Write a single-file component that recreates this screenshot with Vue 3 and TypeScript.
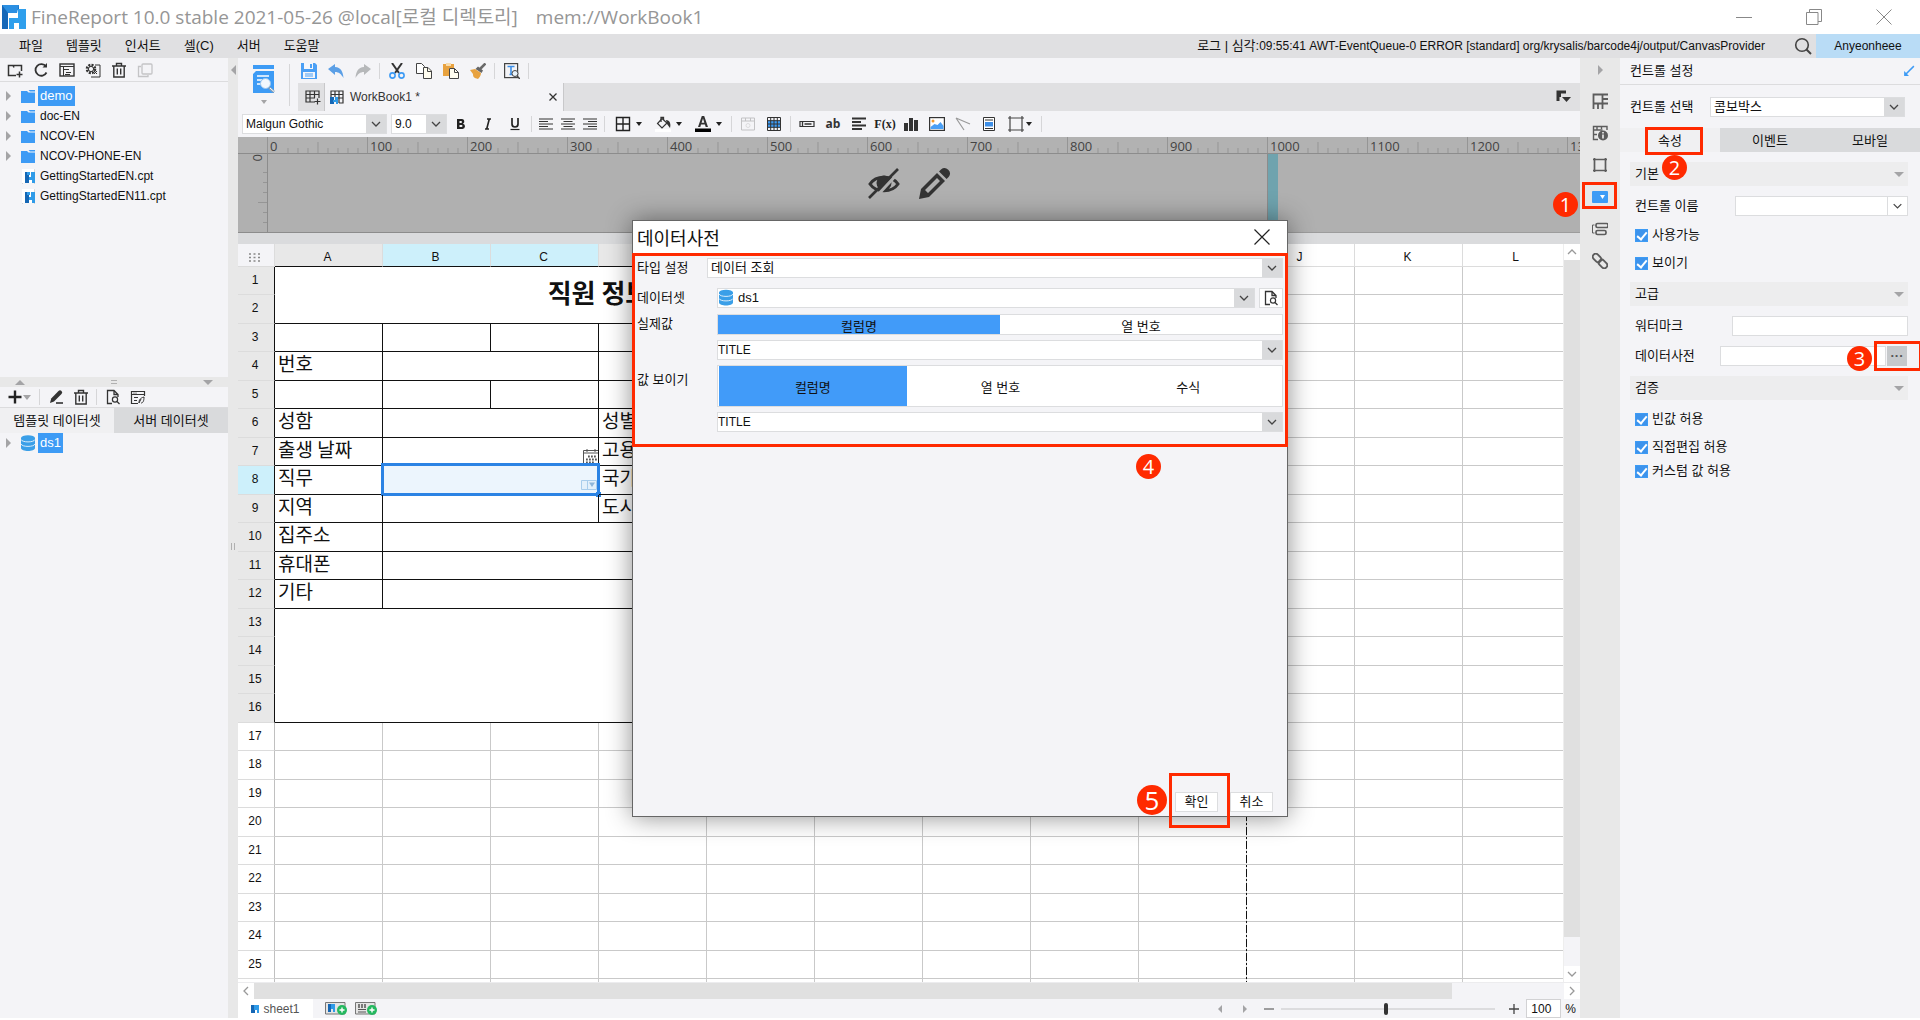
<script setup lang="ts">
import { ref } from 'vue'

interface Cell { text?: string; cols?: number; rows?: number; kind?: string }
interface Row { n: number; cells: Cell[]; blanks: number }
interface Tool { icon: string; label: string; arrow?: boolean; size?: string }

const icons: Record<string, string> = {
  newFolder: '<path d="M9 13.500H1.500V3.500H6l1 2M6 3.500h8.500V9M8 3.500h1M12.500 9.500v6M9.500 12.500h6" stroke="#333" stroke-width="1.500" fill="none"/>',
  refresh: '<path d="M13 4.500A5.800 5.800 0 1 0 13.500 10.500" stroke="#333" stroke-width="1.800" fill="none"/><path d="M9.500 5.500H14V1z" fill="#333"/>',
  panel: '<rect x="1" y="2" width="14" height="12" stroke="#333" stroke-width="1.400" fill="none"/><path d="M1 4.500h14M4.500 4.500V14M4.500 7.500H10M7 10.500h5M6 12.500h5" stroke="#333" fill="none"/>',
  gearBox: '<circle cx="6" cy="7" r="4" fill="none" stroke="#333" stroke-width="2.600" stroke-dasharray="2 1.140"/><circle cx="6" cy="7" r="2.600" fill="none" stroke="#333"/><path d="M10 3h5v12H6M9 12l3-3M9 9l3 3" stroke="#333" fill="none"/>',
  trash: '<path d="M1 4h14M5.500 4V1.500h5V4M2.800 4v11h10.400V4M6.300 6.500v6M9.700 6.500v6" stroke="#333" stroke-width="1.400" fill="none"/>',
  copyDim: '<rect x="5" y="2" width="10" height="10" rx="1" fill="none" stroke="#c4c4c6" stroke-width="1.300"/><path d="M4 4.500H1.500v10H11V13" fill="none" stroke="#c4c4c6" stroke-width="1.300"/>',
  plus: '<path d="M8 1.500v13M1.500 8h13" stroke="#222" stroke-width="2.400"/>',
  edit: '<path d="M2 14l1.200-4.500L10.500 2a2 2 0 0 1 3 3L6 12.500z" fill="#333"/><path d="M8 14h7" stroke="#333" stroke-width="1.600"/>',
  pageFind: '<path d="M7 14.500H2.500v-13H9L13 5.500V8M9 1.500v4h4" stroke="#333" stroke-width="1.300" fill="none"/><circle cx="10" cy="10.500" r="2.600" fill="none" stroke="#333" stroke-width="1.200"/><path d="M12 12.500l2.500 2.500" stroke="#333" stroke-width="1.300"/>',
  source: '<path d="M8 14.500H1.500v-12h13V7M1.500 5.500h13M4 8.500h4M4 11.500h3" stroke="#333" stroke-width="1.200" fill="none"/><circle cx="4" cy="4" r=".6"/><circle cx="6" cy="4" r=".6"/><path d="M9 14c0-3 1-5 5-6M9 14l2-4M11 14c2 0 3-2 3-6" stroke="#333" fill="none"/>',
  save: '<path d="M0 0h14l2 2v14H0z" fill="#4a9ff5"/><path d="M3 0h9v6H3zM2 9h12v6H2z" fill="#f4f6fa"/><path d="M9 1h2v4H9z" fill="#4a9ff5"/><path d="M4 11h8M4 13h8" stroke="#4a9ff5"/>',
  undo: '<path d="M0 6l7-5v3c6 0 8 5 8.500 11C13 11 11 9 7 9v3z" fill="#5b9fe6"/>',
  redo: '<path d="M16 6L9 1v3C3 4 1 9 .500 15 3 11 5 9 9 9v3z" fill="#b6b8ba"/>',
  cut: '<path d="M3 0l7 10M13 0L6 10" stroke="#333" stroke-width="2" fill="none"/><circle cx="3.500" cy="12.500" r="2.600" fill="none" stroke="#3d9bf5" stroke-width="1.600"/><circle cx="12.500" cy="12.500" r="2.600" fill="none" stroke="#3d9bf5" stroke-width="1.600"/>',
  copy: '<path d="M.500.500h5l3 3v7h-8z" fill="#fff" stroke="#444"/><path d="M7.500 4.500h4.500l3.500 3.500v7.500h-8z" fill="#fffdf0" stroke="#444"/><path d="M11.500 4.500V8.500h4" fill="none" stroke="#444"/>',
  paste: '<path d="M0 1h11v4H6v8H0z" fill="#e8a23f"/><path d="M3 0h5v3H3z" fill="#f7dcae"/><path d="M6.500 5.500h5l4 4v6h-9z" fill="#fffdf0" stroke="#444"/><path d="M11.500 5.500v4h4" fill="none" stroke="#444"/>',
  brush: '<path d="M15.500.500L10 6" stroke="#6a6a6a" stroke-width="2.600"/><path d="M8 3.500l5 4-1.500 2.500-6-4z" fill="#666"/><path d="M0 7l5-1 6 4c0 3-2 5-3 6-4-1-5-2-5-5z" fill="#e8a23f"/>',
  textFind: '<rect x=".6" y=".6" width="13" height="14" fill="none" stroke="#444" stroke-width="1.200"/><path d="M3.500 3.500h7M7 3.500v8M5.500 11.500h3" stroke="#3d8fe8" stroke-width="1.600"/><circle cx="11" cy="10.500" r="3" fill="#e8f2fb" stroke="#444"/><path d="M13 13l3 3" stroke="#444" stroke-width="1.500"/>',
  bold: '<path d="M4 3h5a2.500 2.500 0 0 1 1 4.700A2.700 2.700 0 0 1 9.500 13H4zM6.500 5v2H8a1 1 0 0 0 0-2zM6.500 9v2H8.500a1 1 0 0 0 0-2z" fill="#222" fill-rule="evenodd"/>',
  italic: '<path d="M7 3h4M5 13h4M9.300 3L6.700 13" stroke="#222" stroke-width="1.600"/>',
  underline: '<path d="M5 2v6a3 3 0 0 0 6 0V2" stroke="#222" stroke-width="1.700" fill="none"/><path d="M3.500 13.500h9" stroke="#222" stroke-width="1.200"/>',
  left: '<path d="M1 3h14M1 5.500h9M1 8h14M1 10.500h9M1 13h14" stroke="#333" stroke-width="1.200"/>',
  center: '<path d="M1 3h14M3.500 5.500h9M1 8h14M3.500 10.500h9M1 13h14" stroke="#333" stroke-width="1.200"/>',
  right: '<path d="M1 3h14M6 5.500h9M1 8h14M6 10.500h9M1 13h14" stroke="#333" stroke-width="1.200"/>',
  border: '<path d="M1.500 1.500h13v13h-13zM8 1.500v13M1.500 8h13" stroke="#222" stroke-width="1.400" fill="none"/>',
  bucket: '<path d="M0 13h16v3H0z" fill="#fff"/><path d="M7 2.500l5 4.500-5 5L2.500 7.500z" fill="none" stroke="#333" stroke-width="1.200"/><path d="M6 6V1.500h2.500V4" fill="none" stroke="#333" stroke-width="1.300"/><path d="M11 4c4 0 5 4 4 8l-3-4z" fill="#333"/>',
  color: '<path d="M0 12.500h16V16H0z" fill="#000"/><path d="M3 11L6.800 0h2.400L13 11h-2.300l-.8-2.500H6L5.300 11zM6.600 6.700h2.700L8 2.600z" fill="#333" fill-rule="evenodd"/>',
  cellDim: '<path d="M1.500 2h13v12h-13zM1.500 5h13M5.500 2v3M10.500 2v3" fill="none" stroke="#c2c2c4"/><circle cx="8" cy="9.500" r="2" fill="none" stroke="#dcdcde"/>',
  table: '<path d="M1 4.500h14v7H1z" fill="#3d9bf5"/><path d="M1.500 1.500h13v13h-13zM1.500 4.700h13M1.500 8h13M1.500 11.300h13M4.700 1.500v13M8 1.500v13M11.300 1.500v13" fill="none" stroke="#333"/>',
  field: '<path d="M1 5.500h14v5H1z" fill="none" stroke="#333" stroke-width="1.200"/><path d="M3.500 5.500v5M5.500 8h7" stroke="#333" stroke-width="1.300"/>',
  paragraph: '<path d="M1 2.500h14M1 6h9M1 9.500h14M1 13h10" stroke="#333" stroke-width="2"/>',
  chart: '<path d="M1 7h4v8H1zM6 2h4v13H6zM11 4h4v11h-4z" fill="#333"/>',
  picture: '<rect x=".6" y="1.600" width="14.800" height="12.800" fill="#fff" stroke="#333" stroke-width="1.200"/><path d="M1.500 11l4-3 3 1 3-3 3 4v3h-13z" fill="#4a9ff5"/><circle cx="4" cy="5" r="1.500" fill="#f29a2e"/>',
  lines: '<path d="M1 2l14 6M1 2l8 12" stroke="#999" stroke-width="1.200" fill="none"/>',
  report: '<path d="M2.500 1.500h11v13h-11z" fill="#fff" stroke="#333"/><path d="M4 4h8M4 12.500h8" stroke="#333"/><path d="M4 6h8v4.500H4z" fill="#3d8fe8"/>',
  frame: '<path d="M2 2h12v12H2zM0 2h16M0 14h16M2 0v16M14 0v16" fill="none" stroke="#444" stroke-width="1.200"/>',
  sheetAdd: '<path d="M10 13H1V2h13v7M1 5.500h13M1 9h9M5 2v11M9.500 2v7" stroke="#333" stroke-width="1.200" fill="none"/><path d="M12.500 9.500v6M9.500 12.500h6" stroke="#333" stroke-width="1.200"/>',
  sheetBook: '<path d="M2 8V2h12v12h-4M2 5.500h12M6 2v6M10 2v12M8 9h6" stroke="#333" stroke-width="1.200" fill="none"/><path d="M1 8h4v7H1z" fill="#1567b5"/><path d="M4 11h2V8h3v7H7v-2H4z" fill="#2f9be8"/>',
  corner: '<path d="M3 12V3h8M4.500 3v5" stroke="#333" stroke-width="3" fill="none"/><path d="M7 8h9l-4.500 5z" fill="#333"/>',
  attrCell: '<path d="M1.500 1.500h9v9h-9zM10.500 1.500H16M10.500 6H16M10.500 10.500H16M1.500 10.500V16M6 10.500V16M10.500 10.500V16" fill="none" stroke="#5c5c5c" stroke-width="1.800"/>',
  attrInfo: '<path d="M6 14.500H1.500v-13h13.500V5M1.500 5h9M1.500 9.500H5M5 1.500V5M9.500 1.500V4" fill="none" stroke="#5c5c5c" stroke-width="1.400"/><circle cx="11" cy="10.500" r="5" fill="#5c5c5c"/><path d="M11 9.500v4M11 7v1.500" stroke="#eee" stroke-width="1.600"/>',
  attrFloat: '<path d="M2.500 2.500h11v11h-11zM1 2.500h3M2.500 1v3M12 2.500h3M13.500 1v3M1 13.500h3M2.500 12v3M12 13.500h3M13.500 12v3" fill="none" stroke="#5c5c5c" stroke-width="1.700"/>',
  attrWidget: '<rect x="0" y="2" width="16" height="12" rx="1" fill="#3d9bf5"/><path d="M8 6h5l-2.500 4z" fill="#fff"/>',
  attrCond: '<rect x="4" y="2.500" width="12" height="4" rx="1.500" fill="none" stroke="#5c5c5c" stroke-width="1.700"/><rect x="4" y="9.500" width="10" height="4" rx="1.500" fill="none" stroke="#5c5c5c" stroke-width="1.700"/><path d="M2.500 4H.500v8h2" fill="none" stroke="#5c5c5c"/>',
  attrLink: '<g transform="rotate(45 8 8)" fill="none" stroke="#5c5c5c" stroke-width="1.900"><rect x="-1" y="5" width="9.500" height="6" rx="3"/><rect x="7.500" y="5" width="9.500" height="6" rx="3"/></g>',
  db: '<ellipse cx="8" cy="3" rx="7" ry="2.800" fill="#3a9fe8"/><path d="M1 3v10c0 4 14 4 14 0V3z" fill="#3a9fe8"/><path d="M1 4.500c1 3.200 13 3.200 14 0M1 9c1 3.200 13 3.200 14 0" fill="none" stroke="#eaf4fc" stroke-width=".9"/>',
  folder: '<path d="M1 3h6l1.500 1.500H15V15H1z" fill="#3d9bf5"/><path d="M8.500 2H15v1.500H10z" fill="#3d9bf5"/>',
  cpt: '<path d="M2.500 1v15M2.500 1.500h12V16" stroke="#d5d7da" fill="none"/><path d="M2 1h12v14H2z" fill="#fff"/><path d="M5 4h4v11H5z" fill="#1567b5"/><path d="M9 9h2V4h4v11h-3v-3H9zM7 4h3v3H7z" fill="#2f9be8"/>',
  expand: '<path d="M14.500 1.500L4 12" stroke="#3d9bf5" stroke-width="2"/><path d="M1.500 14.500V8l6.500 6.500z" fill="#3d9bf5"/>',
  calendar: '<path d="M.500 1.500h15V16H.500z" fill="#fff" stroke="#555"/><path d="M.500 4h15M4 0v3M12 0v3" stroke="#555" fill="none"/><path d="M5 7.500h9M3 10.500h11M3 13.500h9" stroke="#555" stroke-width="1.800" stroke-dasharray="1.800 1.200"/>',
  comboDim: '<path d="M.500 3.500h15v9H.500zM6.500 3.500v9" fill="#e3f0fb" stroke="#a9cdec"/><path d="M8 5.500h6L11 10z" fill="#8fb6da"/>',
}

const menus = ['파일', '템플릿', '인서트', '셀(C)', '서버', '도움말']
const treeTools: Tool[] = [
  { icon: 'newFolder', label: '새 폴더' }, { icon: 'refresh', label: '새로 고침' }, { icon: 'panel', label: '위치' },
  { icon: 'gearBox', label: '이름 바꾸기' }, { icon: 'trash', label: '삭제' }, { icon: 'copyDim', label: '복사' },
]
const tree = [
  { name: 'demo', folder: true }, { name: 'doc-EN', folder: true }, { name: 'NCOV-EN', folder: true },
  { name: 'NCOV-PHONE-EN', folder: true }, { name: 'GettingStartedEN.cpt', folder: false }, { name: 'GettingStartedEN11.cpt', folder: false },
]
const fileTools: Tool[][] = [
  [{ icon: 'save', label: '저장' }, { icon: 'undo', label: '실행 취소' }, { icon: 'redo', label: '다시 실행' }],
  [{ icon: 'cut', label: '잘라내기' }, { icon: 'copy', label: '복사' }, { icon: 'paste', label: '붙여넣기' }, { icon: 'brush', label: '서식 복사' }],
  [{ icon: 'textFind', label: '찾기' }],
]
const formatTools: { size: string; items: Tool[] }[] = [
  { size: 'w27', items: [{ icon: 'bold', label: '굵게' }, { icon: 'italic', label: '기울임' }, { icon: 'underline', label: '밑줄' }] },
  { size: 'w22', items: [{ icon: 'left', label: '왼쪽' }, { icon: 'center', label: '가운데' }, { icon: 'right', label: '오른쪽' }] },
  { size: 'w40', items: [{ icon: 'border', label: '테두리', arrow: true }, { icon: 'bucket', label: '배경색', arrow: true }, { icon: 'color', label: '글자색', arrow: true }] },
  { size: 'w26', items: [{ icon: 'cellDim', label: '셀 병합' }, { icon: 'table', label: '표' }] },
  {
    size: 'w26',
    items: [
      { icon: 'field', label: '데이터 열' }, { icon: 'ab', label: '텍스트' }, { icon: 'paragraph', label: '서식 있는 텍스트' },
      { icon: 'fx', label: '수식' }, { icon: 'chart', label: '차트' }, { icon: 'picture', label: '그림' },
      { icon: 'lines', label: '사선' }, { icon: 'report', label: '서브 리포트' }, { icon: 'frame', label: '플로팅 요소', arrow: true },
    ],
  },
]
const strip = ['attrCell', 'attrInfo', 'attrFloat', 'attrWidget', 'attrCond', 'attrLink']
const stripLabels = ['셀 요소', '셀 속성', '플로팅 요소', '컨트롤 설정', '조건 속성', '하이퍼링크']

const marks = Array.from({ length: 14 }, (_, i) => i * 100)
const minor = [10, 20, 30, 40, 50, 60, 70, 80, 90]
const columns = 'ABCDEFGHIJKL'.split('')

function cellsOf(n: number): Cell[] {
  const six = Array.from({ length: 6 }, () => ({}))
  const labels: Record<number, string[]> = {
    4: ['번호', ''], 6: ['성함', '성별'], 7: ['출생 날짜', '고용일'], 8: ['직무', '국가'], 9: ['지역', '도시'],
    10: ['집주소'], 11: ['휴대폰'], 12: ['기타'],
  }
  if (n === 1) return [{ text: '직원 정보', cols: 6, rows: 2, kind: 'title' }]
  if (n === 13) return [{ cols: 6, rows: 4 }]
  if (n === 3 || n === 5) return six
  const l = labels[n]
  if (!l) return []
  if (l.length === 1) return [{ text: l[0] }, { cols: 5 }]
  const kind = n === 7 ? 'date' : n === 8 ? 'picked' : ''
  return [{ text: l[0] }, { cols: 2, kind }, { text: l[1] }, { cols: 2 }]
}
const rows: Row[] = Array.from({ length: 26 }, (_, i) => {
  const n = i + 1
  return { n, cells: cellsOf(n), blanks: n <= 16 ? columns.length - 6 : columns.length }
})

const usable = ref(true)
const visible = ref(true)
const allowEmpty = ref(true)
const allowEdit = ref(true)
const allowCustom = ref(true)
const zoom = ref(49)
</script>

<template>
  <div class="app">
    <header class="titlebar">
      <svg class="logo" viewBox="0 0 24 24"><path d="M0 0h17v5H6v19H0z" fill="#1668b8" /><path d="M0 0h17l-2 8H6z" fill="#2b8fe2" /><path d="M7 13h9V4h8v20h-7v-6h-5v6H7z" fill="#2f9fec" /></svg>
      <h1>FineReport 10.0 stable 2021-05-26 @local[로컬 디렉토리]<span>mem://WorkBook1</span></h1>
      <div class="window-buttons">
        <button aria-label="최소화"><svg viewBox="0 0 16 16"><path d="M0 8.500h16" stroke="#888" /></svg></button>
        <button aria-label="이전 크기로"><svg viewBox="0 0 16 16"><path d="M.5 3.500h11.500v12H.5zM3.500 3.500v-3h12v12h-3.500" fill="none" stroke="#888" /></svg></button>
        <button aria-label="닫기"><svg viewBox="0 0 16 16"><path d="M.5.5l15 15M15.500.5l-15 15" stroke="#888" /></svg></button>
      </div>
    </header>

    <nav class="menubar">
      <button v-for="m in menus" :key="m">{{ m }}</button>
      <span class="log"><span>로그 | 심각:</span>09:55:41 AWT-EventQueue-0 ERROR [standard] org/krysalis/barcode4j/output/CanvasProvider</span>
      <button class="search" aria-label="검색"><svg viewBox="0 0 18 18"><circle cx="8" cy="8" r="6.300" fill="none" stroke="#444" stroke-width="1.600" /><path d="M12.500 12.500l4.500 4.500" stroke="#444" stroke-width="2" /></svg></button>
      <a href="#" class="user">Anyeonheee</a>
    </nav>

    <div class="workspace">
      <aside class="left">
        <section class="files">
          <div class="tools">
            <button v-for="t in treeTools" :key="t.icon" class="w26" :aria-label="t.label"><svg class="ic" viewBox="0 0 16 16" v-html="icons[t.icon]" /></button>
          </div>
          <ul class="tree">
            <li v-for="(f, i) in tree" :key="f.name">
              <i class="tri-right" :class="{ none: !f.folder }"></i>
              <svg class="ic" viewBox="0 0 16 16" v-html="icons[f.folder ? 'folder' : 'cpt']" />
              <span :class="{ on: i === 0 }">{{ f.name }}</span>
            </li>
          </ul>
        </section>
        <div class="hsplit"><i class="tri-up"></i><b></b><i class="tri-down"></i></div>
        <section class="datasets">
          <div class="tools">
            <button class="add-ds" aria-label="추가"><svg class="ic" viewBox="0 0 16 16" v-html="icons.plus" /><i class="tri-down"></i></button>
            <i class="sep"></i>
            <button class="w25" aria-label="편집"><svg class="ic" viewBox="0 0 16 16" v-html="icons.edit" /></button>
            <button class="w25" aria-label="삭제"><svg class="ic" viewBox="0 0 16 16" v-html="icons.trash" /></button>
            <i class="sep"></i>
            <button class="w25" aria-label="미리보기"><svg class="ic" viewBox="0 0 16 16" v-html="icons.pageFind" /></button>
            <button class="w25" aria-label="연결"><svg class="ic" viewBox="0 0 16 16" v-html="icons.source" /></button>
          </div>
          <div class="tabs"><button class="on">템플릿 데이터셋</button><button>서버 데이터셋</button></div>
          <ul class="tree flush">
            <li><i class="tri-right"></i><svg class="ic" viewBox="0 0 16 16" v-html="icons.db" /><span class="on">ds1</span></li>
          </ul>
        </section>
      </aside>

      <div class="vsplit"><i class="tri-left"></i><b></b></div>

      <main class="center">
        <div class="top">
          <button class="preview" aria-label="미리보기">
            <svg viewBox="0 0 22 28"><path d="M0 0h21v4H0zM0 9l3-3h18v22H0z" fill="#3d9bf5" /><path d="M4 11h12M4 15h5M4 19h4" stroke="#fff" stroke-width="1.600" /><circle cx="12.500" cy="18.500" r="5" fill="#f2f8fd" stroke="#9cc6ee" /><path d="M16 22.500l5 4.500" stroke="#8aa2b8" stroke-width="2.400" /><path d="M17 23l4 3.500" stroke="#fff" /></svg>
            <i class="tri-down"></i>
          </button>
          <div class="top-right">
            <div class="file-tools">
              <template v-for="(g, gi) in fileTools" :key="gi">
                <button v-for="t in g" :key="t.icon" class="w27" :aria-label="t.label"><svg class="ic" viewBox="0 0 16 16" v-html="icons[t.icon]" /></button>
                <i class="sep"></i>
              </template>
            </div>
            <div class="book-tabs">
              <button class="add" aria-label="새 템플릿"><svg class="ic" viewBox="0 0 16 16" v-html="icons.sheetAdd" /></button>
              <div class="book"><svg class="ic" viewBox="0 0 16 16" v-html="icons.sheetBook" /><span>WorkBook1 *</span>
                <button aria-label="탭 닫기"><svg viewBox="0 0 8 8"><path d="M.5.5l7 7M7.500.5l-7 7" stroke="#333" stroke-width="1.300" /></svg></button>
              </div>
              <button class="more" aria-label="탭 목록"><svg class="ic" viewBox="0 0 16 16" v-html="icons.corner" /></button>
            </div>
          </div>
        </div>

        <div class="format">
          <label class="pick font"><select aria-label="글꼴"><option>Malgun Gothic</option></select><svg viewBox="0 0 20 18"><path d="M6 7l4 4 4-4" /></svg></label>
          <label class="pick size"><select aria-label="글자 크기"><option>9.0</option></select><svg viewBox="0 0 20 18"><path d="M6 7l4 4 4-4" /></svg></label>
          <template v-for="(g, gi) in formatTools" :key="gi">
            <button v-for="t in g.items" :key="t.icon" :class="t.icon === 'frame' ? 'w36' : g.size" :aria-label="t.label">
              <span v-if="t.icon === 'ab'" class="ab">ab</span>
              <span v-else-if="t.icon === 'fx'" class="fx">F(x)</span>
              <svg v-else class="ic" viewBox="0 0 16 16" v-html="icons[t.icon]" />
              <i v-if="t.arrow" class="tri-down dark"></i>
            </button>
            <i class="sep"></i>
          </template>
        </div>

        <div class="ruler">
          <div v-for="m in marks" :key="m" class="mark">
            <svg viewBox="0 0 100 17"><path v-for="t in minor" :key="t" v-show="t > (m === 0 ? 10 : m >= 1000 ? 30 : 20)" :d="`M${t + 1} ${t === 50 ? 5 : 11}V17`" stroke="#959595" /></svg>
            <span>{{ m }}</span>
          </div>
        </div>
        <div class="band">
          <div class="vruler"><span>0</span><i v-for="t in 6" :key="t" :class="{ long: t === 4 }"></i></div>
          <div class="canvas"></div>
          <div class="limit"></div>
          <div class="rest"></div>
          <div class="band-icons">
            <svg viewBox="0 0 32 32"><path d="M2 16C8 7 24 7 30 16 24 25 8 25 2 16z" fill="none" stroke="#333" stroke-width="3" /><circle cx="16" cy="15" r="7.500" fill="#333" /><path d="M32 3L6 31" stroke="#b0b0b0" stroke-width="3" /><path d="M30 1L1 30" stroke="#333" stroke-width="2.600" /></svg>
            <svg viewBox="0 0 32 32"><path d="M0 31l2-10L18 5l8 8L10 29zM6 22l3 3L21 13l-3-3z" fill="#333" fill-rule="evenodd" /><path d="M20 3.500l2-2a5.400 5.400 0 0 1 7.600 7.600l-2 2z" fill="#333" /></svg>
          </div>
        </div>

        <div class="sheet">
          <div class="grid">
            <table>
              <colgroup><col class="head-col" /><col v-for="c in columns" :key="c" class="data-col" /></colgroup>
              <thead>
                <tr>
                  <th class="all"><svg viewBox="0 0 12 9"><path d="M0 1h12M0 4.500h12M0 8h12" stroke="#888" stroke-width="1.600" stroke-dasharray="2 2.500" /></svg></th>
                  <th v-for="(c, i) in columns" :key="c" :class="{ used: i < 6, hit: i === 1 || i === 2 }">{{ c }}</th>
                </tr>
              </thead>
              <tbody>
                <tr v-for="r in rows" :key="r.n" :class="r.n % 2 ? 'short' : 'tall'">
                  <th :class="{ used: r.n <= 16, hit: r.n === 8 }">{{ r.n <= 25 ? r.n : '' }}</th>
                  <td v-for="(c, i) in r.cells" :key="i" class="form" :class="c.kind" :colspan="c.cols" :rowspan="c.rows">
                    {{ c.text }}
                    <svg v-if="c.kind === 'date'" class="ic corner" viewBox="0 0 16 16" v-html="icons.calendar" />
                    <div v-if="c.kind === 'picked'" class="selection"><svg class="ic" viewBox="0 0 16 16" v-html="icons.comboDim" /></div>
                  </td>
                  <td v-for="b in r.blanks" :key="'b' + b"></td>
                </tr>
              </tbody>
            </table>
            <div class="page-end"></div>
          </div>
          <div class="vscroll"><button aria-label="위로"><svg viewBox="0 0 16 16"><path d="M4 10l4-4 4 4" /></svg></button><i class="thumb"></i><i class="track"></i><button aria-label="아래로"><svg viewBox="0 0 16 16"><path d="M4 6l4 4 4-4" /></svg></button></div>
        </div>
        <div class="hscroll"><button aria-label="왼쪽으로"><svg viewBox="0 0 16 16"><path d="M10 4L6 8l4 4" /></svg></button><i class="thumb"></i><i class="track"></i><button aria-label="오른쪽으로"><svg viewBox="0 0 16 16"><path d="M6 4l4 4-4 4" /></svg></button></div>
        <footer class="status">
          <button class="sheet-tab"><svg viewBox="0 0 8 8"><path d="M0 0h4v8H0z" fill="#1567b5" /><path d="M3 0h5v8H6V5H3z" fill="#2f9be8" /></svg>sheet1</button>
          <button class="sheet-add" aria-label="시트 추가"><svg viewBox="0 0 22 13"><path d="M.5.500h19.500v11.500H.5z" fill="#e4e4e4" stroke="#777" /><path d="M3 2h3v8H3z" fill="#1567b5" /><path d="M6 2h4v8H8V7H6z" fill="#2f9be8" /><circle cx="17" cy="8" r="5" fill="#25b85f" /><path d="M17 5.500v5M14.500 8h5" stroke="#fff" stroke-width="1.400" /></svg></button>
          <button class="sheet-add" aria-label="폼 시트 추가"><svg viewBox="0 0 22 13"><path d="M.5.500h19.500v11.500H.5z" fill="#e4e4e4" stroke="#777" /><path d="M3 3h9M3 5h9" stroke="#555" stroke-width="1.500" stroke-dasharray="2 1" /><path d="M3 7.500h8M3 10h8" stroke="#555" /><circle cx="17" cy="8" r="5" fill="#25b85f" /><path d="M17 5.500v5M14.500 8h5" stroke="#fff" stroke-width="1.400" /></svg></button>
          <span class="grow"></span>
          <button class="nav" aria-label="이전 시트"><i class="tri-left"></i></button>
          <button class="nav" aria-label="다음 시트"><i class="tri-right"></i></button>
          <button class="step" aria-label="축소"><svg viewBox="0 0 12 12"><path d="M1 6h10" stroke="#888" stroke-width="1.600" /></svg></button>
          <input v-model="zoom" class="zoom" type="range" min="0" max="100" aria-label="확대/축소" />
          <button class="step" aria-label="확대"><svg viewBox="0 0 12 12"><path d="M1 6h10M6 1v10" stroke="#444" stroke-width="1.300" /></svg></button>
          <input class="percent" value="100" aria-label="배율" /><span class="pc">%</span>
        </footer>
      </main>

      <div class="strip">
        <i class="tri-right"></i>
        <button v-for="(s, i) in strip" :key="s" :aria-label="stripLabels[i]"><svg class="ic" viewBox="0 0 16 16" v-html="icons[s]" /><b v-if="i === 3" class="mark-box"></b></button>
        <b class="badge one">1</b>
      </div>

      <aside class="props">
        <h2>컨트롤 설정<svg viewBox="0 0 16 16" v-html="icons.expand" /></h2>
        <div class="choose">
          <label for="widget">컨트롤 선택</label>
          <span class="pick"><select id="widget"><option>콤보박스</option></select><svg viewBox="0 0 20 18"><path d="M6 7l4 4 4-4" /></svg></span>
        </div>
        <div class="tabs"><button class="on">속성<b class="mark-box"></b><b class="badge">2</b></button><button>이벤트</button><button>모바일</button></div>
        <div class="groups">
          <h3>기본<i class="tri-down"></i></h3>
          <div class="row">
            <label for="wname">컨트롤 이름</label>
            <span class="pick plain name"><select id="wname"><option></option></select><svg viewBox="0 0 20 18"><path d="M6 7l4 4 4-4" /></svg></span>
          </div>
          <label class="check"><input v-model="usable" type="checkbox" />사용가능</label>
          <label class="check last"><input v-model="visible" type="checkbox" />보이기</label>
          <h3>고급<i class="tri-down"></i></h3>
          <div class="row"><label for="water">워터마크</label><input id="water" class="text water" type="text" /></div>
          <div class="row dict">
            <label for="dict">데이터사전</label><input id="dict" class="text" type="text" /><button aria-label="데이터사전 편집">···</button>
            <b class="badge">3</b><b class="mark-box"></b>
          </div>
          <h3>검증<i class="tri-down"></i></h3>
          <label class="check"><input v-model="allowEmpty" type="checkbox" />빈값 허용</label>
          <label class="check"><input v-model="allowEdit" type="checkbox" />직접편집 허용</label>
          <label class="check near"><input v-model="allowCustom" type="checkbox" />커스텀 값 허용</label>
        </div>
      </aside>
    </div>

    <div class="overlay">
      <section class="dialog" role="dialog" aria-labelledby="dlg">
        <header><h2 id="dlg">데이터사전</h2><button aria-label="닫기"><svg viewBox="0 0 16 16"><path d="M.5.5l15 15M15.500.5l-15 15" stroke="#222" stroke-width="1.200" /></svg></button></header>
        <div class="body">
          <div class="line first">
            <label for="type">타입 설정</label>
            <span class="pick"><select id="type"><option>데이터 조회</option></select><svg viewBox="0 0 20 18"><path d="M6 7l4 4 4-4" /></svg></span>
          </div>
          <div class="line">
            <label for="ds">데이터셋</label>
            <span class="pick ds"><select id="ds"><option>ds1</option></select><svg class="ic lead" viewBox="0 0 16 16" v-html="icons.db" /><svg viewBox="0 0 20 18"><path d="M6 7l4 4 4-4" /></svg></span>
            <button class="view" aria-label="미리보기"><svg class="ic" viewBox="0 0 16 16" v-html="icons.pageFind" /></button>
          </div>
          <div class="line stack">
            <label for="actual">실제값</label>
            <div>
              <div class="seg"><button class="on">컬럼명</button><button>열 번호</button></div>
              <span class="pick tight"><select id="actual"><option>TITLE</option></select><svg viewBox="0 0 20 18"><path d="M6 7l4 4 4-4" /></svg></span>
            </div>
          </div>
          <div class="line stack">
            <label for="shown" class="low">값 보이기</label>
            <div>
              <div class="seg high"><button class="on">컬럼명</button><button>열 번호</button><button>수식</button></div>
              <span class="pick tight"><select id="shown"><option>TITLE</option></select><svg viewBox="0 0 20 18"><path d="M6 7l4 4 4-4" /></svg></span>
            </div>
          </div>
          <b class="mark-box"></b>
          <b class="badge four">4</b>
        </div>
        <div class="actions">
          <button class="ok">확인<b class="mark-box"></b><b class="badge five">5</b></button>
          <button>취소</button>
        </div>
      </section>
    </div>
  </div>
</template>

<style>
body {
  margin: 0;
  background: #fff;
}
</style>

<style scoped>
.app, .app :deep(*) { box-sizing: border-box; }
.app {
  position: relative;
  display: flex;
  flex-direction: column;
  height: 100vh;
  overflow: hidden;
  font: 12px/16px "Liberation Sans", "Noto Sans CJK KR", sans-serif;
  color: #111;
}
button, input, select { font: inherit; color: inherit; margin: 0; }
button { border: 0; padding: 0; background: none; display: inline-flex; align-items: center; justify-content: center; flex: none; }
h1, h2, h3, ul { margin: 0; padding: 0; font-weight: normal; list-style: none; }
svg { display: block; flex: none; }
.ic { width: 16px; height: 16px; }
.w22 { width: 22px; }
.w25 { width: 25px; }
.w26 { width: 26px; }
.w27 { width: 27px; }
.w36 { width: 36px; }
.w40 { width: 40px; }
.sep { width: 1px; height: 16px; margin: 0 3px; background: #d6d6d8; flex: none; }
.tri-right, .tri-left, .tri-up, .tri-down { width: 0; height: 0; border: 5px solid transparent; flex: none; }
.tri-right { border-left-color: #a4a4a6; border-right-width: 0; }
.tri-left { border-right-color: #a4a4a6; border-left-width: 0; }
.tri-up { border-bottom-color: #a4a4a6; border-top-width: 0; }
.tri-down { border-top-color: #a4a4a6; border-bottom-width: 0; }
.tri-down.dark { border-width: 4px 3px 0; border-top-color: #222; }

.titlebar { display: flex; align-items: center; height: 34px; padding-left: 2px; background: #fff; flex: none; }
.logo { width: 24px; height: 24px; }
.titlebar h1 { flex: 1; margin-left: 5px; font: 19px/24px "Open Sans", "Noto Sans CJK KR", sans-serif; color: #969696; white-space: nowrap; }
.titlebar h1 span { margin-left: 18px; }
.window-buttons { display: flex; gap: 54px; margin-right: 28px; }
.window-buttons svg { width: 16px; height: 16px; }

.menubar { display: flex; align-items: center; height: 24px; padding-left: 19px; gap: 23px; background: #e0e0e2; font-size: 13px; flex: none; }
.log { flex: 1; text-align: right; font-size: 12px; white-space: nowrap; }
.log span { font-size: 13px; }
.search { margin-right: -19px; margin-left: 6px; }
.search svg { width: 18px; height: 18px; }
.user { display: flex; align-items: center; justify-content: center; align-self: stretch; width: 104px; background: #b9dcf6; color: #111; text-decoration: none; font-size: 12px; }

.workspace { flex: 1; min-height: 0; display: grid; grid-template-columns: 228px 10px minmax(0, 1fr) 40px 300px; padding-bottom: 2px; }

.left { display: flex; flex-direction: column; background: #f4f4f7; min-height: 0; }
.files { height: 319px; }
.tools { display: flex; align-items: center; padding-left: 2px; height: 24px; border-bottom: 1px solid #dcdcde; }
.datasets .tools { height: 21px; }
.add-ds { width: 34px; justify-content: flex-start; padding-left: 5px; }
.add-ds .tri-down { border-width: 5px 4px 0; }
.tree { padding-top: 4px; }
.tree.flush { padding-top: 0; }
.tree li { display: flex; align-items: center; height: 20px; padding-left: 6px; }
.tree .ic { margin: 0 2px 0 9px; }
.tree .none { visibility: hidden; }
.tree span { line-height: 20px; padding: 0 2px; }
.tree .on { background: #3d9bf5; color: #fff; font-size: 13px; }
.hsplit { display: flex; align-items: center; justify-content: space-between; height: 10px; padding: 0 15px; background: #e8e8e8; }
.hsplit b { width: 6px; height: 4px; border: solid #b0b0b0; border-width: 1px 0; }
.datasets { flex: 1; }
.tabs { display: flex; font-size: 13px; }
.tabs button { position: relative; flex: 1; height: 25px; background: #d9dadc; }
.tabs .on { background: #f0f0f2; }

.vsplit { display: flex; flex-direction: column; align-items: center; background: #e8e8e8; padding-top: 7px; }
.vsplit b { width: 4px; height: 7px; margin-top: auto; margin-bottom: auto; border: solid #b0b0b0; border-width: 0 1px; }

.center { display: flex; flex-direction: column; min-height: 0; background: #f4f4f7; }
.top { display: flex; height: 53px; }
.preview { flex-direction: column; gap: 7px; width: 52px; height: 42px; margin-top: 6px; border-right: 1px solid #d6d6d8; justify-content: flex-start; padding-top: 1px; }
.preview svg { width: 22px; height: 28px; }
.preview .tri-down { border-width: 4px 3px 0; }
.top-right { flex: 1; display: flex; flex-direction: column; min-width: 0; }
.file-tools { display: flex; align-items: center; height: 25px; padding-left: 5px; }
.book-tabs { display: flex; align-items: center; height: 28px; margin-left: 8px; background: #e0e0e2; }
.add { width: 27px; height: 28px; padding-left: 4px; border-right: 1px solid #c8c8ca; }
.book { display: flex; align-items: center; width: 239px; height: 28px; padding: 0 6px 0 4px; background: #f4f4f7; border-right: 1px solid #c8c8ca; }
.book span { flex: 1; padding-left: 5px; font-size: 12px; color: #333; }
.book button { width: 8px; }
.book button svg { width: 8px; height: 8px; }
.more { margin-left: auto; margin-right: 9px; }

.format { display: flex; align-items: center; height: 26px; padding-left: 4px; }
.format > button { gap: 5px; height: 22px; }
.format .w36 { gap: 2px; }
.ab { font: bold 12px/14px "Open Sans", sans-serif; color: #333; }
.fx { font: bold 12px/14px "Liberation Serif", serif; color: #222; }
.pick { display: grid; grid-template-columns: minmax(0, 1fr) 20px; height: 20px; border: 1px solid #dcdddf; background: #fff; }
.pick select { grid-area: 1 / 1 / 2 / 3; appearance: none; border: 0; border-radius: 0; background: none; padding: 0 22px 0 3px; width: 100%; outline: 0; }
.pick svg:last-child { grid-area: 1 / 2; width: 20px; height: 18px; background: #d9dadc; pointer-events: none; }
.pick svg path { fill: none; stroke: #444; stroke-width: 1.3; }
.pick.font { width: 145px; margin-right: 4px; }
.pick.size { width: 56px; }
.pick.plain svg:last-child { background: #fff; border-left: 1px solid #dcdddf; }

.ruler { display: flex; height: 17px; padding-left: 29px; background: #b2b2b2; border-bottom: 1px solid #8c8c8c; overflow: hidden; }
.mark { display: grid; flex: none; width: 100px; height: 16px; border-left: 1px solid #959595; }
.mark svg { grid-area: 1 / 1; width: 100px; height: 17px; margin-left: -1px; }
.mark span { grid-area: 1 / 1; padding-left: 2px; font: 13px/18px "Open Sans", sans-serif; color: #444; }
.band { position: relative; display: grid; grid-template-columns: 30px 1000px 10px minmax(0, 1fr); height: 79px; background: #b0b0b0; flex: none; }
.vruler { display: flex; flex-direction: column; align-items: flex-end; gap: 9px; border-right: 1px solid #8c8c8c; border-bottom: 1px solid #8c8c8c; }
.vruler span { writing-mode: vertical-rl; font: 13px/14px "Open Sans", sans-serif; color: #444; height: 9px; margin-right: 2px; }
.vruler i { width: 4px; height: 1px; background: #959595; }
.vruler .long { width: 9px; }
.canvas { border-right: 1px solid #8c8c8c; border-bottom: 1px solid #8c8c8c; }
.limit { background: #6fa3ae; }
.rest { border-bottom: 1px solid #9c9c9c; }
.band-icons { position: absolute; inset: 0; display: flex; justify-content: center; gap: 19px; padding-top: 14px; }
.band-icons svg { width: 32px; height: 32px; }

.sheet { display: flex; flex: 1; min-height: 0; border-top: 11px solid #dadbdd; }
.grid { position: relative; flex: 1; min-width: 0; overflow: hidden; background: #fff; }
table { table-layout: fixed; width: 1px; border-spacing: 0; }
.head-col { width: 37px; }
.data-col { width: 108px; }
th, td { padding: 0; border: solid #c9c9c9; border-width: 0 1px 1px 0; overflow: hidden; }
th { font-weight: normal; font-size: 12px; line-height: 14px; background: #fff; border-color: #dcdcdc; }
thead th { padding: 3px 2px 0 0; }
tbody th { border-right-color: #c0c0c0; padding: 0 2px 2px 0; }
thead tr { height: 23px; }
.short { height: 28px; }
.tall { height: 29px; }
th.used { background: #e8e8e8; }
thead th.used { border-bottom-color: #111; }
tbody th.used { border-right-color: #111; }
th.hit { background: #cdf0fb; }
.all { background: #f4f4f7; }
.all svg { width: 12px; height: 9px; margin: 2px 0 0 11px; }
.form { position: relative; border-color: #111; padding-left: 3px; vertical-align: top; font: 19px/22px "Noto Sans CJK KR", sans-serif; }
.form.title { text-align: center; vertical-align: middle; font-weight: bold; font-size: 26px; line-height: 36px; padding: 0 0 6px; }
.corner { position: absolute; right: -1px; bottom: 0; }
.form.picked { overflow: visible; }
.selection { position: absolute; inset: -3px -2px -2px; display: flex; align-items: flex-end; justify-content: flex-end; border: 3px solid #2b83e4; background: #ecf5fd; }
.selection::after { content: ""; position: absolute; right: -4px; bottom: -4px; width: 5px; height: 5px; background: #2b83e4; }
.page-end { position: absolute; top: 23px; bottom: 0; left: 1008px; width: 1px; background: repeating-linear-gradient(#111 0 8px, #ddd 8px 10px, #111 10px 12px, #ddd 12px 14px); }
.vscroll { display: flex; flex-direction: column; width: 17px; border-left: 1px solid #eee; }
.hscroll { display: flex; height: 17px; border-top: 1px solid #ececee; }
.vscroll button, .hscroll button { width: 16px; height: 16px; background: #fff; }
.vscroll svg, .hscroll svg { width: 16px; height: 16px; fill: none; stroke: #999; stroke-width: 1.3; }
.thumb { flex: 23; background: #e0e0e0; }
.hscroll .thumb { flex: 32; }
.track { flex: 1; }
.hscroll .track { flex: 3; }
.status { display: flex; align-items: center; height: 19px; }
.sheet-tab { gap: 4px; width: 75px; height: 19px; background: #fff; color: #555; font-size: 12px; margin-right: 12px; }
.sheet-tab svg { width: 8px; height: 8px; }
.sheet-add { margin-right: 8px; }
.sheet-add svg { width: 22px; height: 13px; }
.grow { flex: 1; }
.nav { width: 25px; }
.nav i { border-width: 4px; }
.nav .tri-left { border-left-width: 0; }
.nav .tri-right { border-right-width: 0; }
.step { width: 24px; }
.zoom + .step { margin-left: 7px; }
.step svg { width: 12px; height: 12px; }
.zoom { appearance: none; width: 214px; height: 12px; background: linear-gradient(#dcdcde, #dcdcde) center / 100% 2px no-repeat; }
.zoom::-webkit-slider-thumb { appearance: none; width: 4px; height: 12px; border-radius: 2px; background: #333; }
.percent { width: 35px; height: 19px; border: 1px solid #d2d2d4; background: #fff; padding: 0 4px; outline: 0; }
.pc { padding: 0 4px; }

.strip { position: relative; display: flex; flex-direction: column; align-items: center; padding-top: 7px; background: #e8e8e8; }
.strip .tri-right { margin-bottom: 10px; }
.strip button { position: relative; width: 34px; height: 32px; }
.mark-box { position: absolute; border: 3px solid #ff2a00; pointer-events: none; }
.strip .mark-box { inset: 1px 0 4px -1px; }
.badge { position: absolute; display: flex; align-items: center; justify-content: center; width: 25px; height: 25px; border-radius: 50%; background: #ff2a00; color: #fff; font: 20px/24px "Open Sans", sans-serif; }
.badge.one { left: -27px; top: 134px; }

.props { background: #f4f4f7; font-size: 13px; min-width: 0; }
.props h2 { display: flex; align-items: center; justify-content: space-between; height: 27px; padding: 0 5px 0 10px; font-size: 13px; border-bottom: 1px solid #dcdcde; }
.props h2 svg { width: 12px; height: 12px; }
.choose { display: flex; align-items: center; padding: 12px 15px 11px 10px; }
.choose label { width: 80px; }
.choose .pick { flex: 1; }
.props .tabs button { height: 24px; padding-top: 2px; }
.props .tabs .mark-box { inset: -1px 17px -3px 25px; }
.props .tabs .badge { left: 42px; top: 27px; z-index: 1; }
.groups { padding: 10px 12px 0 10px; }
h3 { display: flex; align-items: center; justify-content: space-between; height: 24px; padding: 0 4px 0 5px; font-size: 13px; background: #ededee; }
h3 i { border-width: 5px 5px 0; }
.row { display: flex; align-items: center; justify-content: space-between; margin-top: 10px; padding-left: 5px; height: 20px; }
.pick.name { width: 173px; }
.text { height: 20px; border: 1px solid #dcdddf; background: #fff; padding: 0 3px; outline: 0; }
.water { width: 176px; }
.dict { position: relative; margin-bottom: 10px; }
.dict label { width: 85px; flex: none; }
.dict .text { flex: 1; min-width: 0; }
.dict button { width: 20px; height: 20px; margin: 0 1px; background: #c6c9cc; font-weight: bold; color: #555; }
.dict .badge { left: 217px; top: 0; }
.dict .mark-box { left: 244px; right: -14px; top: -5px; bottom: -5px; }
.check { display: flex; align-items: center; gap: 4px; height: 28px; padding-left: 5px; }
.row + .check { margin-top: 5px; }
h3 + .check { margin-top: 5px; }
.check.last { margin-bottom: 5px; }
.check.near { margin-top: -4px; }
.check input { appearance: none; display: flex; justify-content: center; width: 13px; height: 13px; background: #fff; border: 1px solid #3d9bf5; }
.check input:checked { background: #3d93ec; }
.check input:checked::after { content: ""; width: 4px; height: 8px; border: solid #fff; border-width: 0 2px 2px 0; transform: rotate(40deg); }

.overlay { position: absolute; inset: 0; display: grid; place-items: center; padding-top: 17px; pointer-events: none; }
.dialog { display: flex; flex-direction: column; width: 656px; height: 597px; border: 1px solid #666; background: #f4f4f7; box-shadow: 0 0 24px rgba(0, 0, 0, .45); pointer-events: auto; font-size: 13px; }
.dialog header { display: flex; align-items: center; justify-content: space-between; height: 32px; padding: 0 17px 0 4px; background: #fff; }
.dialog h2 { font: 18px/24px "Noto Sans CJK KR", sans-serif; }
.dialog header svg { width: 16px; height: 16px; }
.body { position: relative; flex: 1; padding: 5px 4px 0 4px; }
.line { display: flex; align-items: center; margin-bottom: 10px; }
.line > label { width: 80px; flex: none; }
.line.first > label { width: 70px; }
.line > .pick { flex: 1; }
.line .ds { grid-template-columns: 20px minmax(0, 1fr) 20px; }
.line .ds select { grid-area: 1 / 1 / 2 / 4; padding-left: 20px; }
.line .ds .lead { grid-area: 1 / 1; height: 17px; pointer-events: none; }
.line .ds svg:last-child { grid-area: 1 / 3; }
.view { width: 24px; height: 20px; margin-left: 4px; border: 1px solid #dcdddf; background: #fff; }
.stack { align-items: flex-start; margin: -4px 0 5px; }
.line + .stack + .stack { margin-top: 0; }
.stack > div { flex: 1; }
.stack > label { line-height: 20px; }
.stack > .low { line-height: 30px; }
.stack .tight { margin-top: 5px; font-size: 12px; }
.tight select { padding-left: 0; }
.seg { display: flex; height: 21px; border: 1px solid #dcdddf; background: #fff; }
.seg.high { height: 42px; padding-left: 1px; }
.seg button { flex: 1; padding-top: 4px; }
.seg .on { background: #419bf9; }
.body > .mark-box { inset: 0 -1px auto -1px; height: 194px; }
.badge.four { left: 503px; top: 201px; }
.actions { display: flex; justify-content: flex-end; gap: 12px; padding: 0 14px 4px 0; }
.actions button { position: relative; width: 43px; height: 20px; border: 1px solid #dcdddf; background: #fff; }
.actions .mark-box { inset: -20px -13px -17px -7px; }
.badge.five { width: 30px; height: 30px; left: -39px; top: -8px; font-size: 26px; }
</style>
